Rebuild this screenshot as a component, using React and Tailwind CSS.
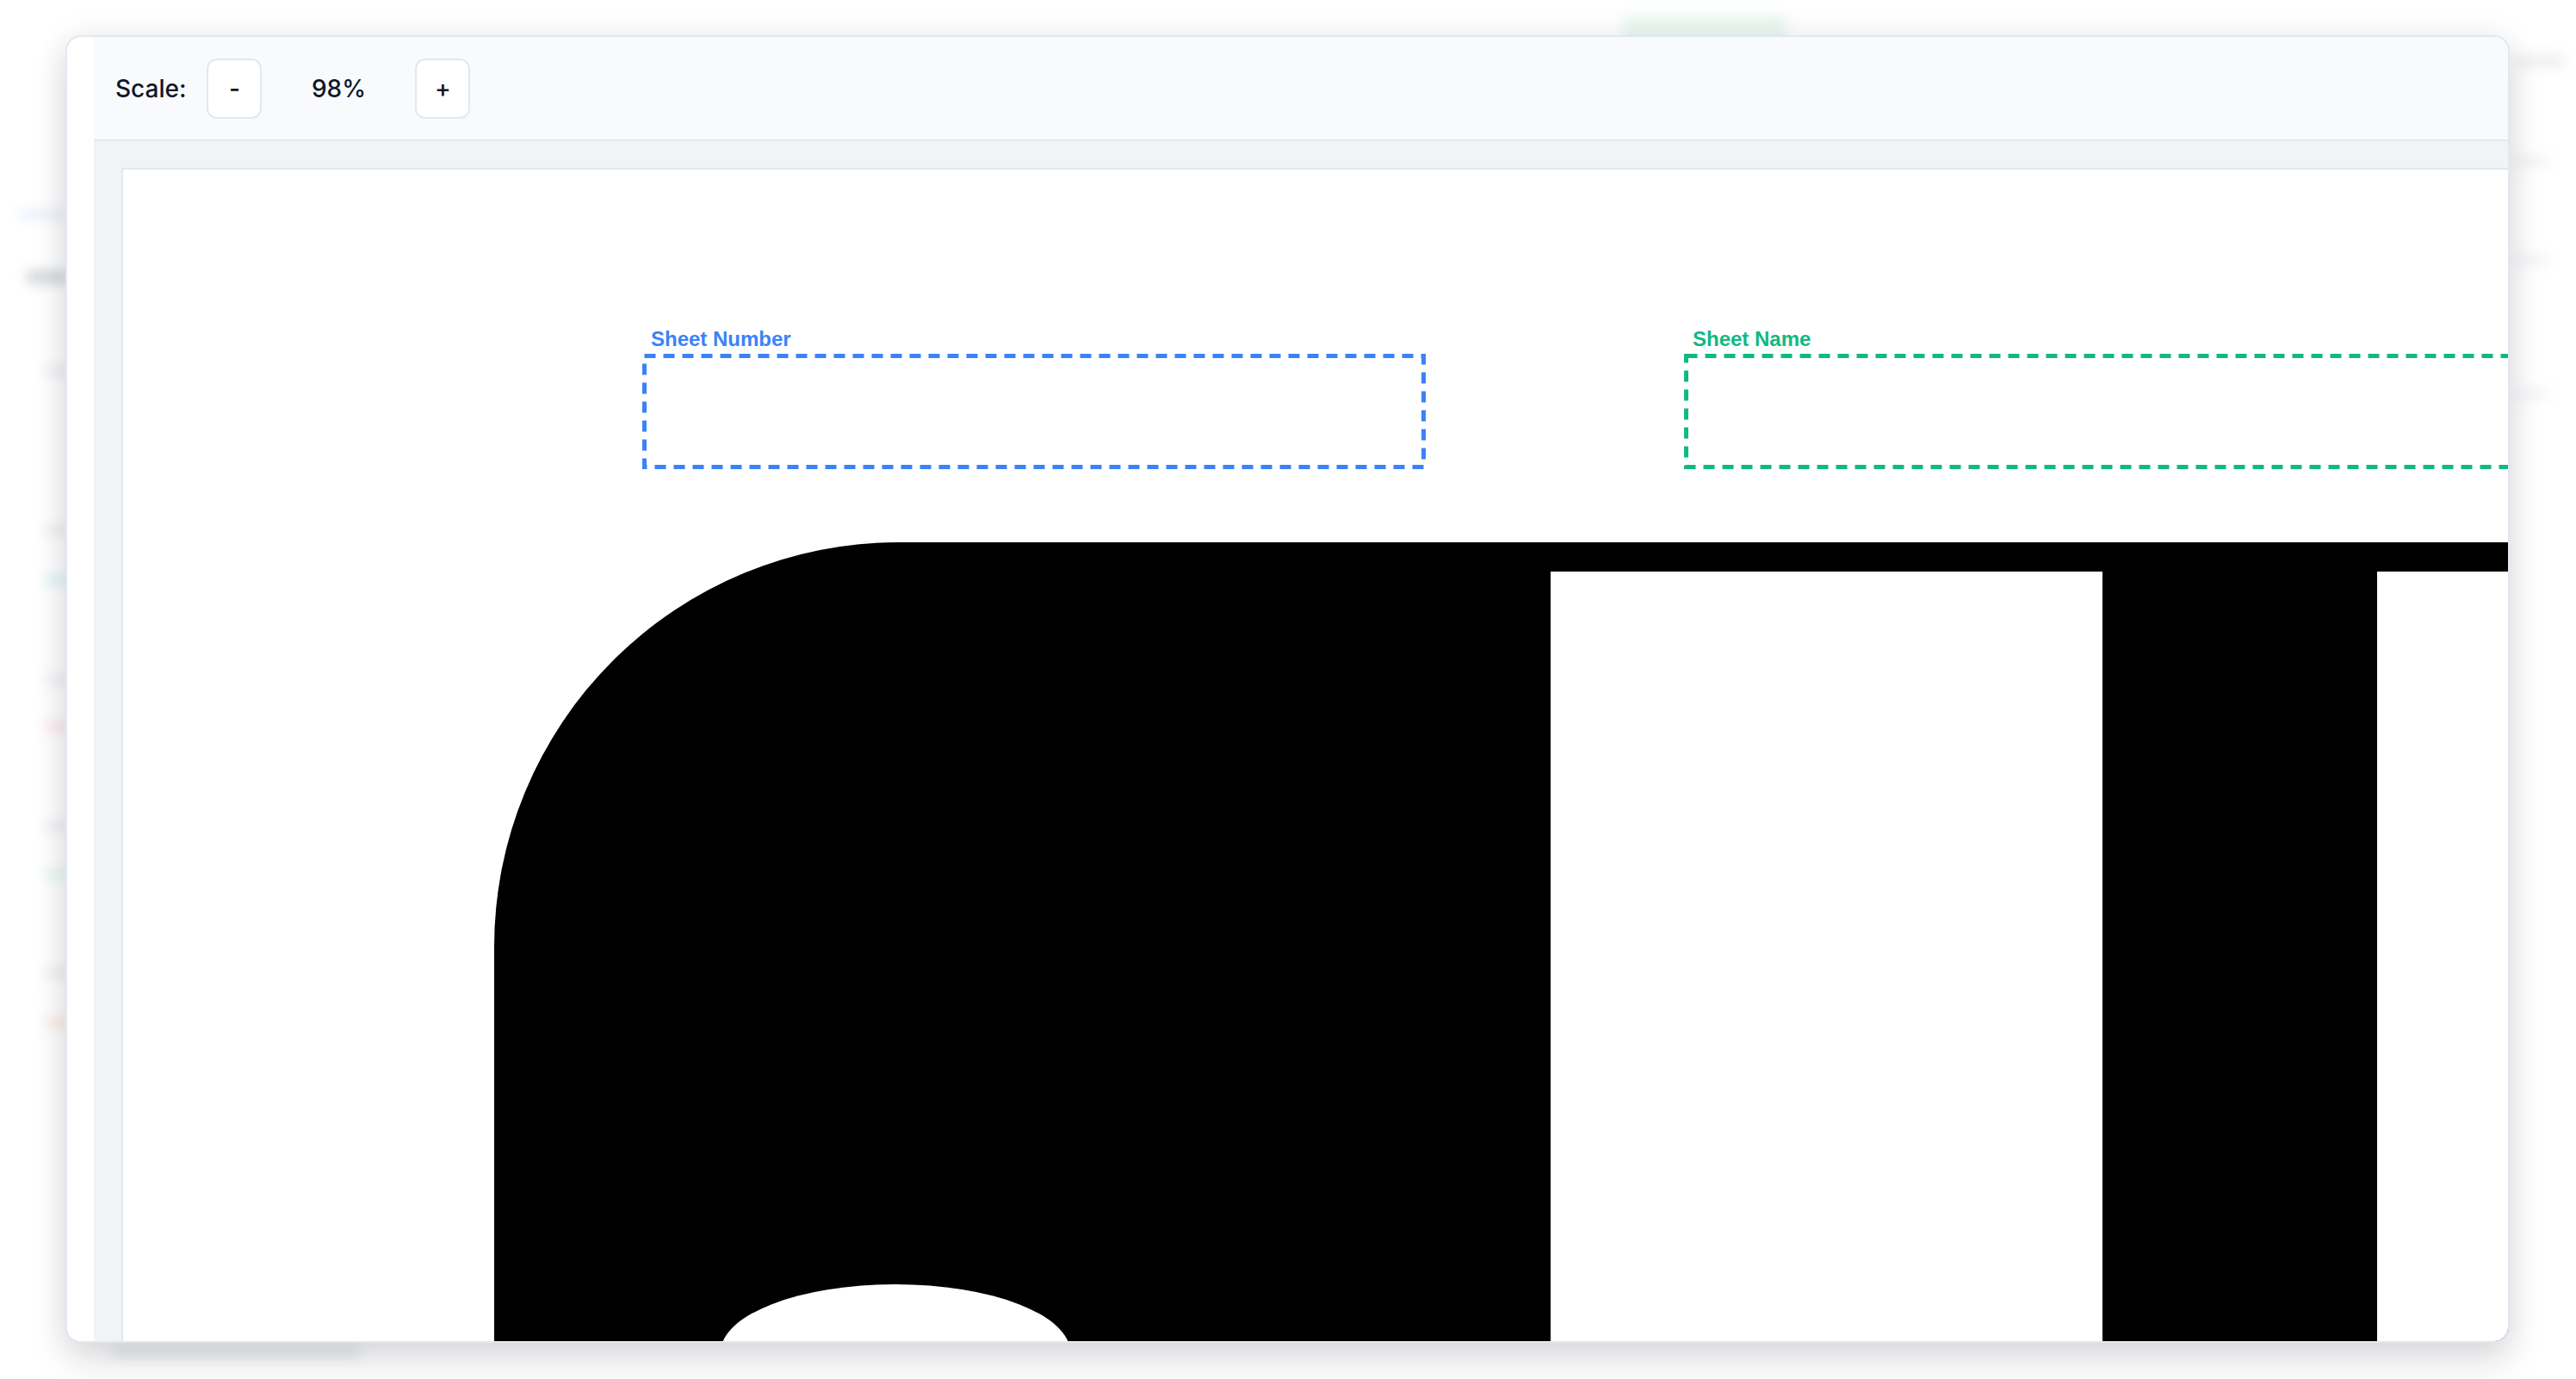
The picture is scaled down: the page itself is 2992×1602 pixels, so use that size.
import React, { useState } from 'react';

// blurred page behind the preview dialog
const BACKDROP = [
    { cls: 'left-[22px] top-[244px] w-[56px] h-[10px] bg-[#c7d7fb]' },
    { cls: 'left-[30px] top-[314px] w-[50px] h-[16px] bg-[#9aa1ab]' },
    { cls: 'left-[52px] top-[426px] w-[30px] h-[10px] bg-[#cfd3d9]' },
    { cls: 'left-[52px] top-[611px] w-[30px] h-[10px] bg-[#cfd3d9]' },
    { cls: 'left-[52px] top-[669px] w-[30px] h-[10px] bg-[#9fe3ec]' },
    { cls: 'left-[52px] top-[785px] w-[30px] h-[10px] bg-[#cfd3d9]' },
    { cls: 'left-[52px] top-[839px] w-[30px] h-[10px] bg-[#f9b9d3]' },
    { cls: 'left-[52px] top-[955px] w-[30px] h-[10px] bg-[#cfd3d9]' },
    { cls: 'left-[52px] top-[1011px] w-[30px] h-[10px] bg-[#b5ead0]' },
    { cls: 'left-[52px] top-[1125px] w-[30px] h-[10px] bg-[#cfd3d9]' },
    { cls: 'left-[52px] top-[1183px] w-[30px] h-[10px] bg-[#fbc3b8]' },
    { cls: 'left-[130px] top-[1563px] w-[290px] h-[14px] bg-[#cfd3d9]' },
    { cls: 'left-[1885px] top-[18px] w-[190px] h-[30px] rounded-full bg-[#cdeedb]' },
    { cls: 'left-[2920px] top-[64px] w-[60px] h-[14px] bg-[#d6d9de]' },
    { cls: 'left-[2920px] top-[182px] w-[40px] h-[12px] bg-[#dfe2e6]' },
    { cls: 'left-[2920px] top-[296px] w-[40px] h-[12px] bg-[#dfe2e6]' },
    { cls: 'left-[2920px] top-[452px] w-[40px] h-[12px] bg-[#e3e6ea]' },
];

const FIELDS = [
    { label: 'Sheet Number', pos: 'left-[603px] top-[214px]', width: 910, color: '#3b82f6', text: 'text-[#3b82f6]' },
    { label: 'Sheet Name', pos: 'left-[1813px] top-[214px]', width: 1200, color: '#10b981', text: 'text-[#10b981]' },
];

const Backdrop = () => (
    <div className="absolute inset-0 blur-[7px] opacity-70">
        {BACKDROP.map((b, i) => (
            <div key={i} className={`absolute rounded-md ${b.cls}`} />
        ))}
    </div>
);

// title-block artwork as rendered on the sheet
const SheetArt = () => (
    <svg className="absolute left-0 top-0" width="2900" height="1400" viewBox="0 0 2900 1400">
        <path d="M431 1400 L431 903 A470 470 0 0 1 901 433 L2900 433 L2900 1400 Z" fill="#000" />
        <rect x="1658" y="467" width="641" height="933" fill="#fff" />
        <rect x="2618" y="467" width="300" height="933" fill="#fff" />
        <ellipse cx="897" cy="1374" rx="203" ry="79" fill="#fff" />
    </svg>
);

const FieldBox = ({ label, pos, width, color, text }) => (
    <div className={`absolute h-[134px] ${pos}`} style={{ width }}>
        <svg className="absolute inset-0" width={width} height="134">
            <rect x="2.5" y="2.5" width={width - 5} height="129" fill="none"
                stroke={color} strokeWidth="5" strokeDasharray="13 9" />
        </svg>
        <span className={`absolute -top-[29px] left-[10px] whitespace-nowrap text-[24px] leading-[24px] font-bold ${text}`}
            style={{ fontFamily: '"Liberation Sans", Arial, sans-serif' }}>
            {label}
        </span>
    </div>
);

const ScaleButton = ({ children, onClick }) => (
    <button onClick={onClick}
        className="w-[64px] h-[70px] flex items-center justify-center bg-white border-2 border-[#e2e8f0] rounded-[12px] text-[28px] font-medium text-[#0f172a]">
        {children}
    </button>
);

export default function App() {
    const [scale, setScale] = useState(98);

    return (
        <div className="relative w-[2992px] h-[1602px] overflow-hidden bg-white" style={{ fontFamily: 'Inter, "Noto Sans", sans-serif' }}>
            <Backdrop />
            <div className="absolute inset-0 bg-white/40" />

            <div className="absolute inset-0 pl-[76px] pt-[41px]">
                <div className="flex w-[2839px] h-[1519px] bg-white border-2 border-[#e2e8f0] rounded-[18px] overflow-hidden shadow-[0_22px_40px_rgba(15,23,42,0.13),0_0_36px_rgba(15,23,42,0.07)]">
                    <div className="w-[31px] shrink-0 bg-white" />
                    <div className="flex-1 min-w-0 flex flex-col">
                        <div className="h-[121px] shrink-0 flex items-center gap-[24px] pl-[25px] bg-[#f8fafc] border-b-2 border-[#e2e8f0]">
                            <span className="text-[28px] font-medium text-[#0f172a]">Scale:</span>
                            <ScaleButton onClick={() => setScale(s => s - 1)}>-</ScaleButton>
                            <span className="w-[130px] text-center text-[28px] font-medium text-[#0f172a]">{scale}%</span>
                            <ScaleButton onClick={() => setScale(s => s + 1)}>+</ScaleButton>
                        </div>
                        <div className="flex-1 min-h-0 overflow-hidden bg-[#f1f3f5] pl-[32px] pt-[31px]">
                            <div className="relative w-[3000px] h-[1500px] bg-white border-l-2 border-t-2 border-[#e2e8f0]">
                                <SheetArt />
                                {FIELDS.map(f => <FieldBox key={f.label} {...f} />)}
                            </div>
                        </div>
                    </div>
                </div>
            </div>
        </div>
    );
}
